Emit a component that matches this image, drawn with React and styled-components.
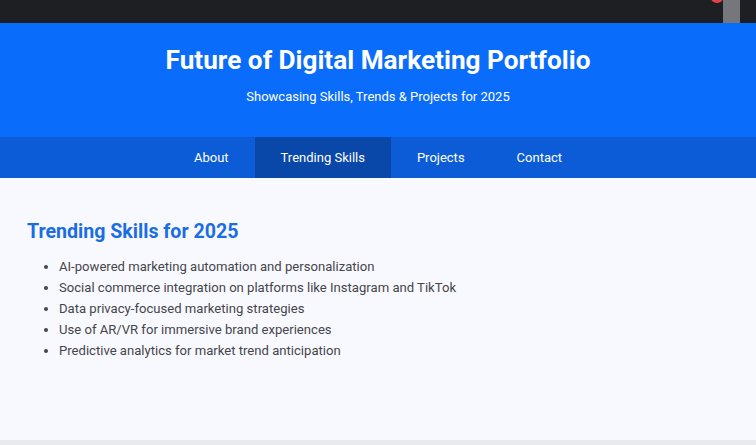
import React from "react";
import styled, { createGlobalStyle } from "styled-components";

const GlobalStyle = createGlobalStyle`
  html, body {
    margin: 0;
    padding: 0;
    background: #e9eaee;
    font-family: Roboto, "Liberation Sans", Arial, sans-serif;
  }
`;

const Page = styled.div`
  width: 756px;
  height: 445px;
  overflow: hidden;
  display: flex;
  flex-direction: column;
  background: #e9eaee;
`;

const TopBar = styled.div`
  position: relative;
  height: 23px;
  flex: none;
  background: #1e1f23;
`;

const Thumb = styled.div`
  position: absolute;
  top: 0;
  left: 723px;
  width: 17px;
  height: 23px;
  background: #76777c;
`;

const Dot = styled.div`
  position: absolute;
  top: -7px;
  left: 711px;
  width: 12px;
  height: 10px;
  border-radius: 50%;
  background: #e8404a;
`;

const Header = styled.header`
  height: 114px;
  flex: none;
  background: #0a6cfb;
  color: #fff;
  text-align: center;
  box-sizing: border-box;
  padding-top: 21px;
`;

const Title = styled.h1`
  margin: 0;
  font-size: 26.2px;
  line-height: 32px;
  font-weight: 700;
`;

const Subtitle = styled.p`
  margin: 13px 0 0;
  font-size: 13px;
  line-height: 16px;
`;

const Nav = styled.nav`
  height: 41px;
  flex: none;
  background: #0b5cd6;
  display: flex;
  justify-content: center;
`;

const NavItem = styled.a`
  display: flex;
  align-items: center;
  padding: 0 26px;
  color: #fff;
  font-size: 13px;
  text-decoration: none;
  background: ${p => (p.$active ? "#0947a9" : "transparent")};
`;

const Main = styled.main`
  height: 262px;
  flex: none;
  background: #f8f9fe;
  box-sizing: border-box;
  padding: 42px 27px 0;
`;

const Heading = styled.h2`
  margin: 0;
  font-size: 19.6px;
  line-height: 24px;
  font-weight: 700;
  color: #1a6de3;
`;

const List = styled.ul`
  margin: 12px 0 0;
  padding-left: 32px;
  color: #45454a;
  font-size: 13.1px;
  line-height: 21px;
`;

const navItems = ["About", "Trending Skills", "Projects", "Contact"];

const skills = [
  "AI-powered marketing automation and personalization",
  "Social commerce integration on platforms like Instagram and TikTok",
  "Data privacy-focused marketing strategies",
  "Use of AR/VR for immersive brand experiences",
  "Predictive analytics for market trend anticipation",
];

export default function App() {
  return (
    <Page>
      <GlobalStyle />
      <TopBar>
        <Dot />
        <Thumb />
      </TopBar>
      <Header>
        <Title>Future of Digital Marketing Portfolio</Title>
        <Subtitle>Showcasing Skills, Trends &amp; Projects for 2025</Subtitle>
      </Header>
      <Nav>
        {navItems.map(item => (
          <NavItem key={item} href="#" $active={item === "Trending Skills"}>
            {item}
          </NavItem>
        ))}
      </Nav>
      <Main>
        <Heading>Trending Skills for 2025</Heading>
        <List>
          {skills.map(s => (
            <li key={s}>{s}</li>
          ))}
        </List>
      </Main>
    </Page>
  );
}
